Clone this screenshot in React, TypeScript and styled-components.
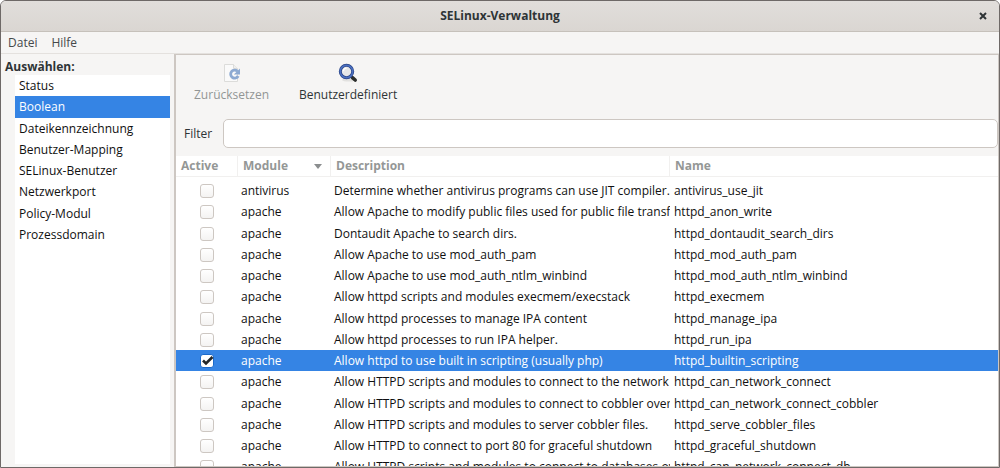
import React, { useState } from "react";
import styled, { createGlobalStyle, css } from "styled-components";

const GlobalStyle = createGlobalStyle`
  *, *::before, *::after { box-sizing: border-box; }
  body { margin: 0; background: #ffffff; }
  body, button, input {
    font-family: "Open Sans", "Noto Sans", sans-serif;
    font-size: 12px;
    line-height: 16px;
    color: #2e3436;
  }
`;

const Window = styled.div`
  display: flex;
  flex-direction: column;
  height: 100vh;
  overflow: hidden;
  background: #f6f5f4;
  border: 1px solid #6e6967;
  border-radius: 6px 6px 0 0;
`;

const TitleBar = styled.header`
  display: grid;
  grid-template-columns: 32px 1fr 32px;
  align-items: center;
  flex: none;
  height: 31px;
  background: linear-gradient(#e1dedb, #dad6d2);
  border-bottom: 1px solid #c6c1bb;
`;

const Title = styled.h1`
  grid-column: 2;
  margin: 0;
  font-size: 12px;
  line-height: 16px;
  font-weight: 700;
  text-align: center;
`;

const CloseButton = styled.button`
  display: flex;
  align-items: center;
  justify-content: center;
  height: 24px;
  padding: 0;
  border: 0;
  background: none;
`;

const MenuBar = styled.nav`
  display: flex;
  flex: none;
  height: 22px;
  border-bottom: 1px solid #e4e1de;
`;

const MenuItem = styled.button`
  padding: 1px 7px 0;
  border: 0;
  background: none;
  color: #45494b;
`;

const Body = styled.div`
  display: flex;
  flex: 1;
  min-height: 0;
`;

const Sidebar = styled.aside`
  display: flex;
  flex-direction: column;
  flex: none;
  width: 173px;
  padding: 5px 4px 3px;
`;

const SidebarTitle = styled.h2`
  margin: 0;
  font-size: 12px;
  line-height: 16px;
  font-weight: 700;
`;

const CategoryList = styled.ul`
  flex: 1;
  margin: 0 0 0 10px;
  padding: 0;
  list-style: none;
  background: #ffffff;
`;

const CategoryItem = styled.li`
  height: 21px;
  &:nth-child(4n + 2) { height: 22px; }
`;

const selectedColors = css`
  background: #3584e4;
  color: #ffffff;
`;

const CategoryButton = styled.button<{ $selected: boolean }>`
  width: 100%;
  height: 100%;
  padding: 0 4px;
  border: 0;
  background: none;
  color: #101010;
  text-align: left;
  ${(p) => p.$selected && selectedColors}
`;

const Content = styled.main`
  display: flex;
  flex-direction: column;
  flex: 1;
  min-width: 0;
  border: 1px solid #cdc7c2;
  border-left-width: 2px;
`;

const Toolbar = styled.div`
  display: flex;
  flex: none;
  gap: 16px;
  padding: 8px 11px 0;
`;

const ToolButton = styled.button`
  display: flex;
  flex-direction: column;
  align-items: center;
  gap: 4px;
  padding: 0 7px;
  border: 0;
  background: none;
  &:disabled { color: #929595; }
`;

const FilterBar = styled.div`
  display: flex;
  align-items: center;
  flex: none;
  gap: 11px;
  padding: 16px 0 8px 8px;
`;

const FilterInput = styled.input`
  flex: 1;
  min-width: 0;
  height: 29px;
  padding: 0 8px;
  border: 1px solid #cdc7c2;
  border-radius: 5px;
  background: #ffffff;
  outline: none;
`;

const TableArea = styled.div`
  flex: 1;
  min-height: 0;
  overflow: hidden;
  background: #ffffff;
`;

const Table = styled.table`
  width: 100%;
  table-layout: fixed;
  border-collapse: separate;
  border-spacing: 0;
  color: #101010;
  tbody::before {
    content: "";
    display: table-row;
    height: 3px;
  }
`;

const HeaderCell = styled.th<{ $width?: number }>`
  width: ${(p) => (p.$width ? `${p.$width}px` : "auto")};
  height: 21px;
  padding: 0;
  border-right: 1px solid #f1f0ef;
  border-bottom: 1px solid #f1f0ef;
  &:last-child { border-right: 0; }
`;

const SortButton = styled.button`
  display: flex;
  align-items: center;
  justify-content: space-between;
  width: 100%;
  padding: 0 8px 0 5px;
  border: 0;
  background: none;
  color: #949796;
  font-weight: 700;
`;

const Row = styled.tr<{ $selected: boolean }>`
  height: 21px;
  &:nth-child(4n + 2) { height: 22px; }
  ${(p) => p.$selected && selectedColors}
`;

const Cell = styled.td`
  padding: 0 1px 0 3px;
  line-height: 16px;
  overflow: hidden;
  white-space: nowrap;
  &:last-child { padding-left: 4px; }
`;

const CheckCell = styled(Cell)`
  padding: 0;
  line-height: 0;
  text-align: center;
`;

const Check = styled.input`
  appearance: none;
  display: inline-block;
  width: 14px;
  height: 14px;
  margin: 0;
  vertical-align: middle;
  border: 1px solid #cdc7c2;
  border-radius: 3px;
  background: linear-gradient(#ffffff, #f4f3f2);
  &:checked {
    border-color: #1b6acb;
    background: #ffffff;
  }
`;

const CheckBox = styled.label`
  display: inline-grid;
  vertical-align: middle;
  > * { grid-area: 1 / 1; }
  svg { display: none; pointer-events: none; }
  input:checked + svg { display: block; }
`;

const categories = [
  "Status",
  "Boolean",
  "Dateikennzeichnung",
  "Benutzer-Mapping",
  "SELinux-Benutzer",
  "Netzwerkport",
  "Policy-Modul",
  "Prozessdomain",
];

const booleans = [
  ["antivirus", "Determine whether antivirus programs can use JIT compiler.", "antivirus_use_jit"],
  ["apache", "Allow Apache to modify public files used for public file transfer", "httpd_anon_write"],
  ["apache", "Dontaudit Apache to search dirs.", "httpd_dontaudit_search_dirs"],
  ["apache", "Allow Apache to use mod_auth_pam", "httpd_mod_auth_pam"],
  ["apache", "Allow Apache to use mod_auth_ntlm_winbind", "httpd_mod_auth_ntlm_winbind"],
  ["apache", "Allow httpd scripts and modules execmem/execstack", "httpd_execmem"],
  ["apache", "Allow httpd processes to manage IPA content", "httpd_manage_ipa"],
  ["apache", "Allow httpd processes to run IPA helper.", "httpd_run_ipa"],
  ["apache", "Allow httpd to use built in scripting (usually php)", "httpd_builtin_scripting"],
  ["apache", "Allow HTTPD scripts and modules to connect to the network", "httpd_can_network_connect"],
  ["apache", "Allow HTTPD scripts and modules to connect to cobbler over", "httpd_can_network_connect_cobbler"],
  ["apache", "Allow HTTPD scripts and modules to server cobbler files.", "httpd_serve_cobbler_files"],
  ["apache", "Allow HTTPD to connect to port 80 for graceful shutdown", "httpd_graceful_shutdown"],
  ["apache", "Allow HTTPD scripts and modules to connect to databases over", "httpd_can_network_connect_db"],
];

function RevertIcon() {
  return (
    <svg width="20" height="20" viewBox="0 0 20 20" aria-hidden="true">
      <path d="M2.5 1.5h9l4 4v13h-13z" fill="#fafafa" stroke="#dcdcda" />
      <path d="M11.5 1.5v4h4" fill="#f0f0ee" stroke="#dcdcda" />
      <path
        d="M15.4 8.2A4 4 0 1 0 16.2 13"
        fill="none"
        stroke="#8daad2"
        strokeWidth="2.8"
      />
      <path d="M11.8 11.4H18V5.6z" fill="#8daad2" />
    </svg>
  );
}

function SearchIcon() {
  return (
    <svg width="20" height="20" viewBox="0 0 20 20" aria-hidden="true">
      <ellipse cx="11" cy="17" rx="7" ry="1.6" fill="#e2e1df" />
      <path d="M12.5 12.5 14.5 14.5" stroke="#8a8c88" strokeWidth="2.4" />
      <path d="M14.4 14.6 17.2 17" stroke="#2c2e2c" strokeWidth="3.6" strokeLinecap="round" />
      <circle cx="8.5" cy="8.5" r="6.2" fill="#e6e7e8" stroke="#2c4585" strokeWidth="3" />
      <circle cx="8.5" cy="8.5" r="6.2" fill="none" stroke="#4a6fc0" strokeWidth="1.6" />
      <path d="M5.4 8.2a3.2 3.2 0 0 1 3.2-3" fill="none" stroke="#ffffff" strokeWidth="1.2" />
    </svg>
  );
}

export default function App() {
  const [category, setCategory] = useState("Boolean");
  const [selected, setSelected] = useState("httpd_builtin_scripting");

  return (
    <>
      <GlobalStyle />
      <Window>
        <TitleBar>
          <Title>SELinux-Verwaltung</Title>
          <CloseButton aria-label="Schließen">
            <svg width="8" height="8" viewBox="0 0 8 8" aria-hidden="true">
              <path d="M1 1 7 7M7 1 1 7" stroke="#2e3436" strokeWidth="2" />
            </svg>
          </CloseButton>
        </TitleBar>
        <MenuBar>
          <MenuItem>Datei</MenuItem>
          <MenuItem>Hilfe</MenuItem>
        </MenuBar>
        <Body>
          <Sidebar>
            <SidebarTitle>Auswählen:</SidebarTitle>
            <CategoryList>
              {categories.map((name) => (
                <CategoryItem key={name}>
                  <CategoryButton $selected={name === category} onClick={() => setCategory(name)}>
                    {name}
                  </CategoryButton>
                </CategoryItem>
              ))}
            </CategoryList>
          </Sidebar>
          <Content>
            <Toolbar>
              <ToolButton disabled>
                <RevertIcon />
                Zurücksetzen
              </ToolButton>
              <ToolButton>
                <SearchIcon />
                Benutzerdefiniert
              </ToolButton>
            </Toolbar>
            <FilterBar>
              <label htmlFor="filter">Filter</label>
              <FilterInput id="filter" type="text" />
            </FilterBar>
            <TableArea>
              <Table>
                <thead>
                  <tr>
                    <HeaderCell $width={62}><SortButton>Active</SortButton></HeaderCell>
                    <HeaderCell $width={93}>
                      <SortButton>
                        Module
                        <svg width="8" height="5" viewBox="0 0 8 5" aria-hidden="true">
                          <path d="M0 0h8L4 5z" fill="#8b8e8f" />
                        </svg>
                      </SortButton>
                    </HeaderCell>
                    <HeaderCell $width={339}><SortButton>Description</SortButton></HeaderCell>
                    <HeaderCell><SortButton>Name</SortButton></HeaderCell>
                  </tr>
                </thead>
                <tbody>
                  {booleans.map(([module, description, name]) => (
                    <Row key={name} $selected={name === selected} onClick={() => setSelected(name)}>
                      <CheckCell>
                        <CheckBox>
                          <Check
                            type="checkbox"
                            aria-label={name}
                            defaultChecked={name === "httpd_builtin_scripting"}
                          />
                          <svg width="14" height="14" viewBox="0 0 14 14" aria-hidden="true">
                            <path d="M3 6.5 6 9.5 12.5 3" fill="none" stroke="#232729" strokeWidth="2.6" />
                          </svg>
                        </CheckBox>
                      </CheckCell>
                      <Cell>{module}</Cell>
                      <Cell>{description}</Cell>
                      <Cell>{name}</Cell>
                    </Row>
                  ))}
                </tbody>
              </Table>
            </TableArea>
          </Content>
        </Body>
      </Window>
    </>
  );
}
